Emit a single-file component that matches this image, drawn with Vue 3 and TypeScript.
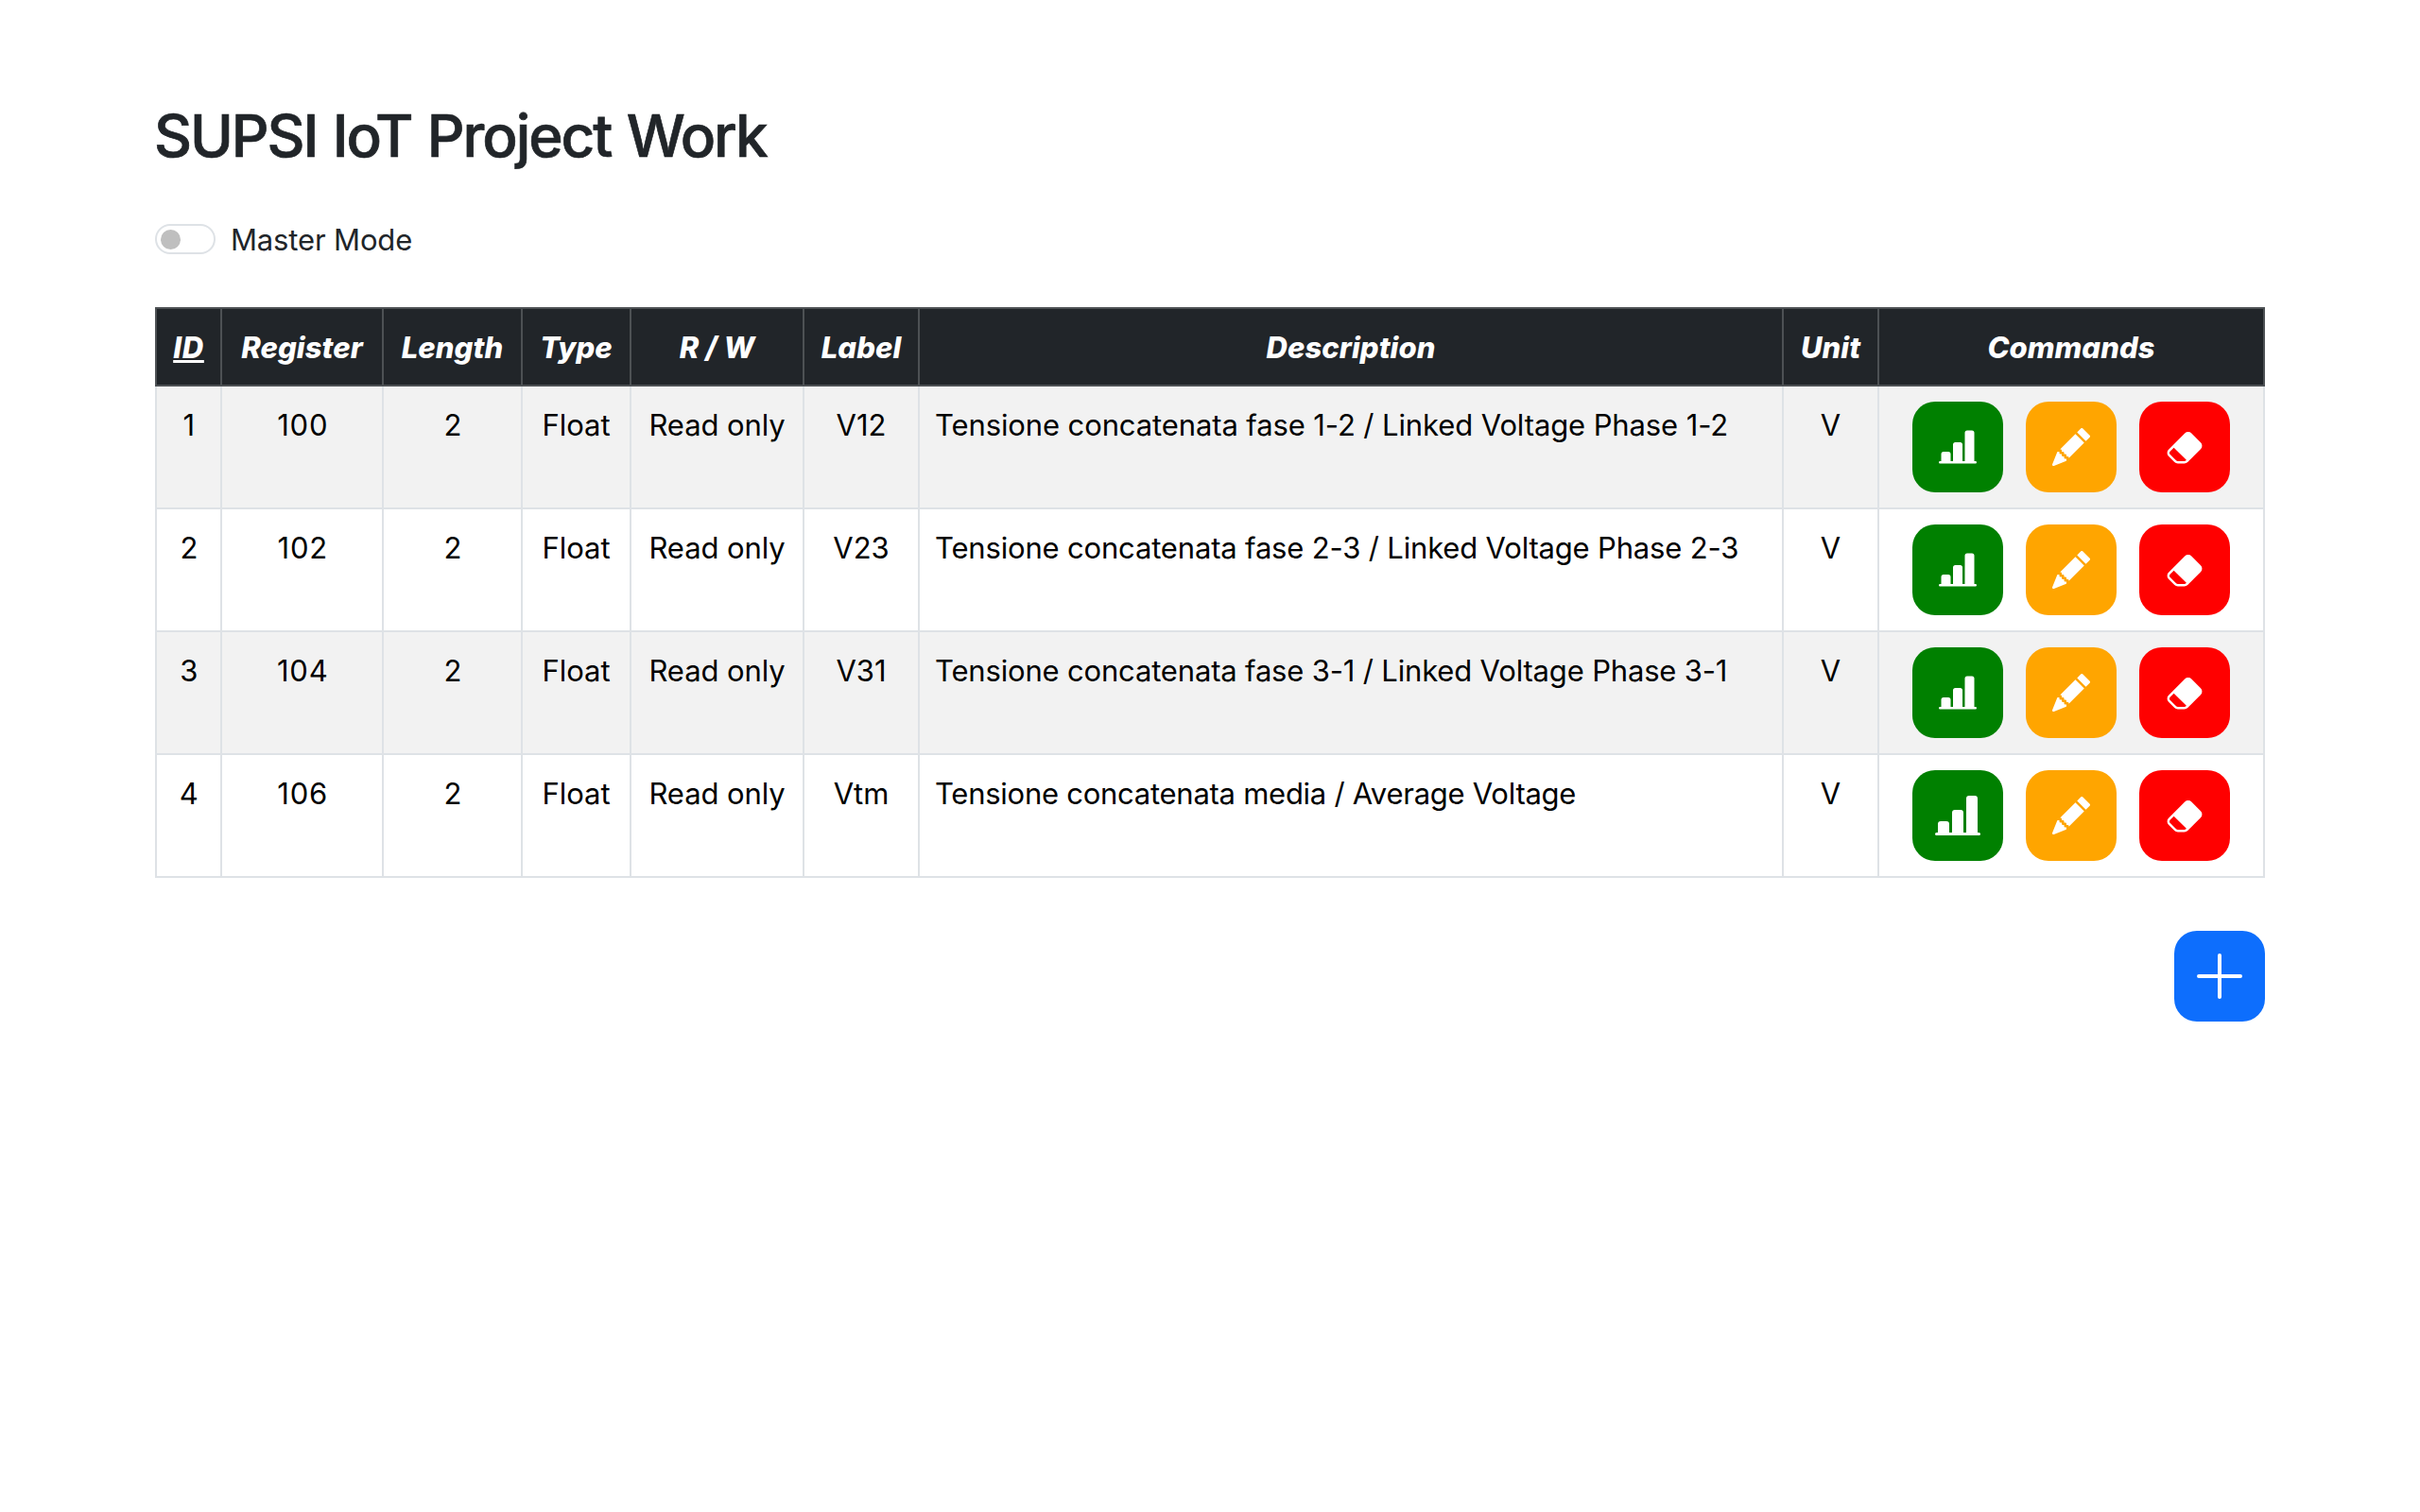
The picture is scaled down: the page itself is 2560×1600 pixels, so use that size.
<script setup lang="ts">
interface Register {
  id: number
  register: number
  length: number
  type: string
  access: string
  label: string
  description: string
  unit: string
}

const columns = [
  { title: 'ID', width: 69 },
  { title: 'Register', width: 171 },
  { title: 'Length', width: 147 },
  { title: 'Type', width: 115 },
  { title: 'R / W', width: 183 },
  { title: 'Label', width: 122 },
  { title: 'Description', width: 914 },
  { title: 'Unit', width: 101 },
  { title: 'Commands', width: 408 },
]

const rows: Register[] = [
  { id: 1, register: 100, length: 2, type: 'Float', access: 'Read only', label: 'V12', description: 'Tensione concatenata fase 1-2 / Linked Voltage Phase 1-2', unit: 'V' },
  { id: 2, register: 102, length: 2, type: 'Float', access: 'Read only', label: 'V23', description: 'Tensione concatenata fase 2-3 / Linked Voltage Phase 2-3', unit: 'V' },
  { id: 3, register: 104, length: 2, type: 'Float', access: 'Read only', label: 'V31', description: 'Tensione concatenata fase 3-1 / Linked Voltage Phase 3-1', unit: 'V' },
  { id: 4, register: 106, length: 2, type: 'Float', access: 'Read only', label: 'Vtm', description: 'Tensione concatenata media / Average Voltage', unit: 'V' },
]

const selectedId = 4
</script>

<template>
  <main class="page">
    <h1>SUPSI IoT Project Work</h1>
    <label class="mode">
      <span class="switch"><span class="knob"></span></span>
      <span class="mode-text">Master Mode</span>
    </label>
    <table>
      <colgroup>
        <col v-for="c in columns" :key="c.title" :style="{ width: c.width + 'px' }" />
      </colgroup>
      <thead>
        <tr>
          <th v-for="c in columns" :key="c.title" :class="{ sorted: c.title === 'ID' }">{{ c.title }}</th>
        </tr>
      </thead>
      <tbody>
        <tr v-for="r in rows" :key="r.id">
          <td class="number">{{ r.id }}</td>
          <td class="number">{{ r.register }}</td>
          <td class="number">{{ r.length }}</td>
          <td>{{ r.type }}</td>
          <td class="access">{{ r.access }}</td>
          <td>{{ r.label }}</td>
          <td class="description">{{ r.description }}</td>
          <td>{{ r.unit }}</td>
          <td class="command-cell">
            <div class="commands">
              <button class="btn chart" :class="{ active: r.id === selectedId }" aria-label="Chart">
                <svg viewBox="0 0 16 16"><path d="M11 2a1 1 0 0 1 1-1h2a1 1 0 0 1 1 1v12h.5a.5.5 0 0 1 0 1H.5a.5.5 0 0 1 0-1H1v-3a1 1 0 0 1 1-1h2a1 1 0 0 1 1 1v3h1V7a1 1 0 0 1 1-1h2a1 1 0 0 1 1 1v7h1z" /></svg>
              </button>
              <button class="btn edit" aria-label="Edit">
                <svg viewBox="0 0 16 16"><path d="M12.854.146a.5.5 0 0 0-.707 0L10.5 1.793 14.207 5.5l1.647-1.646a.5.5 0 0 0 0-.708zm.646 6.061L9.793 2.5 3.293 9H3.5a.5.5 0 0 1 .5.5v.5h.5a.5.5 0 0 1 .5.5v.5h.5a.5.5 0 0 1 .5.5v.5h.5a.5.5 0 0 1 .5.5v.207zm-7.468 7.468A.5.5 0 0 1 6 13.5V13h-.5a.5.5 0 0 1-.5-.5V12h-.5a.5.5 0 0 1-.5-.5V11h-.5a.5.5 0 0 1-.5-.5V10h-.5a.5.5 0 0 1-.175-.032l-.179.178a.5.5 0 0 0-.11.168l-2 5a.5.5 0 0 0 .65.65l5-2a.5.5 0 0 0 .168-.11z" /></svg>
              </button>
              <button class="btn erase" aria-label="Delete">
                <svg viewBox="0 0 16 16"><path d="M8.086 2.207a2 2 0 0 1 2.828 0l3.879 3.879a2 2 0 0 1 0 2.828l-5.5 5.5A2 2 0 0 1 7.879 15H5.12a2 2 0 0 1-1.414-.586l-2.5-2.5a2 2 0 0 1 0-2.828zm.66 11.34L3.453 8.254 1.914 9.793a1 1 0 0 0 0 1.414l2.5 2.5a1 1 0 0 0 .707.293H7.88a1 1 0 0 0 .707-.293z" /></svg>
              </button>
            </div>
          </td>
        </tr>
      </tbody>
    </table>
    <button class="btn add" aria-label="Add">
      <svg viewBox="0 0 16 16"><path d="M8 2a.5.5 0 0 1 .5.5v5h5a.5.5 0 0 1 0 1h-5v5a.5.5 0 0 1-1 0v-5h-5a.5.5 0 0 1 0-1h5v-5A.5.5 0 0 1 8 2" /></svg>
    </button>
  </main>
</template>

<style>
body {
  background: #fff;
}
</style>

<style scoped>
.page {
  display: flex;
  flex-direction: column;
  padding: 105px 164px 0;
  font: 400 31px/48px Inter, "Liberation Sans", sans-serif;
  color: #212529;
}

h1 {
  margin: 0 0 0 -1px;
  font-size: 62px;
  font-weight: 500;
  line-height: 77px;
  letter-spacing: -2.05px;
  word-spacing: 1.8px;
  -webkit-text-stroke: 0.7px #212529;
}

.mode {
  display: flex;
  align-items: center;
  height: 48px;
  margin-top: 47px;
}

.switch {
  display: flex;
  align-items: center;
  box-sizing: border-box;
  width: 64px;
  height: 32px;
  border: 2px solid #dee2e6;
  border-radius: 16px;
}

.knob {
  width: 21px;
  height: 21px;
  margin-left: 3.5px;
  border-radius: 50%;
  background: #bfbfbf;
}

.mode-text {
  margin-left: 16px;
  padding-top: 2px;
  letter-spacing: -0.15px;
}

table {
  width: 2232px;
  margin-top: 48px;
  table-layout: fixed;
  border-collapse: collapse;
  color: #000;
}

th,
td {
  padding: 17px 0 15px;
  border: 2px solid #dee2e6;
  text-align: center;
  vertical-align: top;
  white-space: nowrap;
}

th {
  height: 48px;
  border-color: #4d5154;
  background: #212529;
  color: #fff;
  font-weight: 800;
  font-style: italic;
  letter-spacing: 0.05px;
}

.sorted {
  letter-spacing: 0.7px;
  text-decoration: underline;
}

tbody tr:nth-child(odd) {
  background: #f2f2f2;
}

td.number {
  padding-left: 1.5px;
  letter-spacing: 0.8px;
}

td.access {
  letter-spacing: -0.1px;
}

td.description {
  padding-left: 16px;
  text-align: left;
  letter-spacing: -0.17px;
}

tr:nth-child(1) td.description {
  letter-spacing: -0.11px;
}

tr:nth-child(4) td.description {
  letter-spacing: -0.26px;
}

td.command-cell {
  padding: 16px 0;
}

.commands {
  display: flex;
  justify-content: center;
  gap: 24px;
}

.btn {
  display: flex;
  align-items: center;
  justify-content: center;
  width: 96px;
  height: 96px;
  padding: 0;
  border: 0;
  border-radius: 24px;
  color: #fff;
}

.btn svg {
  width: 40px;
  height: 40px;
  fill: currentColor;
}

.chart {
  background: #008000;
}

.chart.active svg {
  width: 48px;
  height: 48px;
}

.edit {
  background: #ffa500;
}

.erase {
  background: #f00;
}

.add {
  align-self: flex-end;
  margin-top: 56px;
  background: #0d6efd;
}

.add svg {
  width: 64px;
  height: 64px;
}
</style>
